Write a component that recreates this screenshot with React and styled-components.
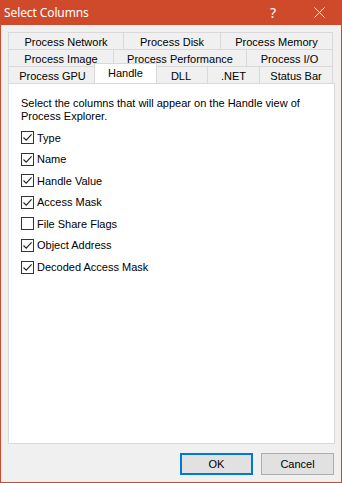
import React from 'react';
import styled, { createGlobalStyle } from 'styled-components';

const GlobalStyle = createGlobalStyle`
  html, body {
    margin: 0;
    padding: 0;
    background: #ffffff;
  }
  * {
    box-sizing: border-box;
  }
`;

const ACCENT = '#cf4a2b';

const Window = styled.div`
  width: 342px;
  height: 483px;
  display: flex;
  flex-direction: column;
  border: 1px solid ${ACCENT};
  border-top: none;
  background: #f0f0f0;
  font-family: "Liberation Sans", Arial, sans-serif;
  font-size: 11px;
  color: #000;
`;

const TitleBar = styled.div`
  height: 25px;
  margin: 0 -1px;
  background: ${ACCENT};
  display: flex;
  align-items: center;
  color: #fff;
  font-family: "Noto Sans", "Open Sans", sans-serif;
  font-size: 12px;
  padding-left: 4px;
`;

const Title = styled.div`
  flex: 1;
  letter-spacing: -0.1px;
`;

const TitleButton = styled.div`
  width: 46px;
  height: 25px;
  display: flex;
  align-items: center;
  justify-content: center;
  font-size: 14px;
`;

const Body = styled.div`
  flex: 1;
  display: flex;
  flex-direction: column;
  padding: 7px 6px 0 7px;
`;

const TabStrip = styled.div`
  display: flex;
  flex-direction: column;
  width: 325px;
  position: relative;
  z-index: 1;
`;

const TabRow = styled.div`
  display: flex;
  height: 17px;
`;

const Tab = styled.div`
  width: ${p => p.$w}px;
  height: 17px;
  display: flex;
  align-items: center;
  justify-content: center;
  border: 1px solid #d9d9d9;
  border-bottom: none;
  border-right: none;
  background: #f0f0f0;
  white-space: nowrap;
  padding-top: 1px;

  &:last-child {
    border-right: 1px solid #d9d9d9;
  }
`;

const ActiveTab = styled(Tab)`
  position: relative;
  background: #fff;
  height: 20px;
  margin: -3px -2px -1px -2px;
  width: ${p => p.$w + 4}px;
  border-right: 1px solid #d9d9d9;
  padding-top: 0;
  padding-bottom: 2px;
  z-index: 2;
  & + div {
    border-left: none;
  }
`;

const Panel = styled.div`
  height: 361px;
  background: #fff;
  border: 1px solid #d9d9d9;
  padding: 13px 12px 0 12px;
`;

const Intro = styled.p`
  margin: 0;
  line-height: 13px;
`;

const CheckList = styled.div`
  display: flex;
  flex-direction: column;
  gap: 8.6px;
  margin-top: 8px;
`;

const CheckRow = styled.label`
  display: flex;
  align-items: center;
  height: 13px;
  gap: 3px;
`;

const Box = styled.span`
  width: 13px;
  height: 13px;
  border: 1px solid #333;
  background: #fff;
  display: flex;
  align-items: center;
  justify-content: center;
`;

const Footer = styled.div`
  display: flex;
  justify-content: flex-end;
  gap: 8px;
  padding-top: 9px;
  padding-right: 1px;
`;

const Button = styled.button`
  width: 73px;
  height: 22px;
  background: #e1e1e1;
  border: 1px solid ${p => (p.$default ? '#0078d7' : '#adadad')};
  box-shadow: ${p => (p.$default ? 'inset 0 0 0 1px #0078d7' : 'none')};
  font-family: "Liberation Sans", Arial, sans-serif;
  font-size: 11px;
  color: #000;
  padding: 0;
`;

const rows = [
  [['Process Network', 115], ['Process Disk', 97], ['Process Memory', 113]],
  [['Process Image', 105], ['Process Performance', 133], ['Process I/O', 87]],
  [['Process GPU', 88], ['Handle', 59], ['DLL', 52], ['.NET', 52], ['Status Bar', 74]],
];

const columns = [
  ['Type', true],
  ['Name', true],
  ['Handle Value', true],
  ['Access Mask', true],
  ['File Share Flags', false],
  ['Object Address', true],
  ['Decoded Access Mask', true],
];

function Check({ on }) {
  return (
    <Box>
      {on && (
        <svg width="11" height="11" viewBox="0 0 11 11">
          <path d="M1.5 5.5 L4.2 8.2 L9.6 2.3" fill="none" stroke="#222" strokeWidth="1.1" />
        </svg>
      )}
    </Box>
  );
}

export default function App() {
  return (
    <>
      <GlobalStyle />
      <Window>
        <TitleBar>
          <Title>Select Columns</Title>
          <TitleButton>?</TitleButton>
          <TitleButton>
            <svg width="11" height="11" viewBox="0 0 11 11">
              <path d="M0.5 0.5 L10.5 10.5 M10.5 0.5 L0.5 10.5" stroke="#fff" strokeWidth="1" />
            </svg>
          </TitleButton>
        </TitleBar>
        <Body>
          <TabStrip>
            {rows.map((row, i) => (
              <TabRow key={i}>
                {row.map(([name, w]) =>
                  name === 'Handle' ? (
                    <ActiveTab key={name} $w={w}>{name}</ActiveTab>
                  ) : (
                    <Tab key={name} $w={w}>{name}</Tab>
                  )
                )}
              </TabRow>
            ))}
          </TabStrip>
          <Panel>
            <Intro>
              Select the columns that will appear on the Handle view of
              <br />
              Process Explorer.
            </Intro>
            <CheckList>
              {columns.map(([name, on]) => (
                <CheckRow key={name}>
                  <Check on={on} />
                  {name}
                </CheckRow>
              ))}
            </CheckList>
          </Panel>
          <Footer>
            <Button $default>OK</Button>
            <Button>Cancel</Button>
          </Footer>
        </Body>
      </Window>
    </>
  );
}
